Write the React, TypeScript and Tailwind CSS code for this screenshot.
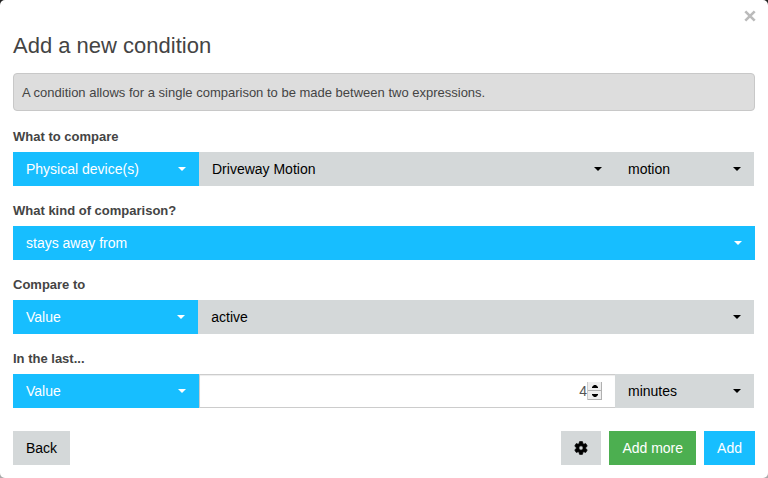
import React, { useId, useState } from "react";

type Tone = "blue" | "gray";

const tones: Record<Tone, string> = {
  blue: "bg-[#17beff] text-white",
  gray: "bg-[#d4d8d9] text-black",
};

function Caret() {
  return (
    <svg
      aria-hidden="true"
      viewBox="0 0 8 4"
      className="pointer-events-none absolute top-[15px] right-[13px] h-1 w-2 fill-current"
    >
      <path d="M0 0h8L4 4z" />
    </svg>
  );
}

function Picker({
  id,
  label,
  value,
  options = [],
  tone = "gray",
}: {
  id?: string;
  label?: string;
  value: string;
  options?: string[];
  tone?: Tone;
}) {
  return (
    <div className={`relative min-w-0 ${tones[tone]}`}>
      <select
        id={id}
        aria-label={label}
        defaultValue={value}
        className="block h-[34px] w-full appearance-none bg-transparent pr-8 pl-[13px] text-sm"
      >
        {[value, ...options].map((o) => (
          <option key={o}>{o}</option>
        ))}
      </select>
      <Caret />
    </div>
  );
}

function Field({
  label,
  columns,
  children,
}: {
  label: string;
  columns: string;
  children: (id: string) => React.ReactNode;
}) {
  const id = useId();
  return (
    <div>
      <label htmlFor={id} className="block pb-[5px] text-[13px] leading-5 font-bold">
        {label}
      </label>
      <div className={`grid ${columns}`}>{children(id)}</div>
    </div>
  );
}

function NumberBox() {
  const [n, setN] = useState(4);
  const step =
    "flex h-[9px] w-full items-center justify-center border-r border-b border-[#b0b0b0] bg-[#eeeeee]";
  return (
    <div className="relative min-w-0">
      <input
        type="number"
        aria-label="Duration"
        value={n}
        onChange={(e) => setN(Number(e.target.value))}
        className="block h-[34px] w-full border border-r-0 border-[#cccccc] bg-white pr-7 text-right text-sm text-[#555555] shadow-[inset_0_1px_1px_rgba(0,0,0,0.075)] [appearance:textfield] [&::-webkit-inner-spin-button]:appearance-none"
      />
      <div className="absolute top-2 right-[13px] flex w-[15px] flex-col border-l border-[#cccccc]">
        <button type="button" aria-label="Increase" onClick={() => setN(n + 1)} className={step}>
          <svg viewBox="0 0 6 3" className="h-[3px] w-1.5">
            <path d="M0 3V2L2 0h2l2 2v1z" />
          </svg>
        </button>
        <button type="button" aria-label="Decrease" onClick={() => setN(n - 1)} className={step}>
          <svg viewBox="0 0 6 3" className="h-[3px] w-1.5">
            <path d="M0 0v1l2 2h2l2-2V0z" />
          </svg>
        </button>
      </div>
    </div>
  );
}

function Gear() {
  return (
    <svg aria-hidden="true" viewBox="0 0 24 24" className="h-4 w-4 fill-black stroke-black">
      <path d="M19.14 12.94c.04-.3.06-.61.06-.94 0-.32-.02-.64-.07-.94l2.03-1.58a.49.49 0 0 0 .12-.61l-1.92-3.32a.49.49 0 0 0-.59-.22l-2.39.96c-.5-.38-1.03-.7-1.62-.94l-.36-2.54a.48.48 0 0 0-.48-.41h-3.84a.48.48 0 0 0-.47.41l-.36 2.54c-.59.24-1.13.57-1.62.94l-2.39-.96a.48.48 0 0 0-.59.22L2.74 8.87a.48.48 0 0 0 .12.61l2.03 1.58c-.05.3-.09.63-.09.94s.02.64.07.94l-2.03 1.58a.49.49 0 0 0-.12.61l1.92 3.32c.12.22.37.29.59.22l2.39-.96c.5.38 1.03.7 1.62.94l.36 2.54c.05.24.24.41.48.41h3.84c.24 0 .44-.17.47-.41l.36-2.54c.59-.24 1.13-.56 1.62-.94l2.39.96c.22.08.47 0 .59-.22l1.92-3.32a.48.48 0 0 0-.12-.61l-2.01-1.58zM12 15.2a3.2 3.2 0 1 1 0-6.4 3.2 3.2 0 0 1 0 6.4z" />
    </svg>
  );
}

export default function App() {
  const button = "h-[34px] px-[13px] text-sm";
  const threeColumns = "mr-px grid-cols-[186fr_416fr_139fr]";
  return (
    <div className="min-h-screen bg-linear-to-b from-[#222222] to-[#aaaaaa] font-['Liberation_Sans',Arial,sans-serif] text-[#444444]">
      <form
        role="dialog"
        aria-labelledby="dialog-title"
        onSubmit={(e) => e.preventDefault()}
        className="relative min-h-screen rounded-[5px] bg-white p-[13px] pt-8"
      >
        <button
          type="button"
          aria-label="Close"
          className="absolute top-1 right-3 text-[#bbbbbb]"
        >
          <svg viewBox="0 0 12 24" className="h-6 w-3 fill-none stroke-current stroke-[2.6]">
            <path d="M1.3 7.3l9.4 9.4M10.7 7.3l-9.4 9.4" />
          </svg>
        </button>

        <h1 id="dialog-title" className="text-[22px] leading-7">
          Add a new condition
        </h1>

        <p className="mt-[13px] mb-4 rounded-[4px] border border-[#c8c8c8] bg-[#dddddd] px-2 pt-[9px] pb-[7px] text-[13px] leading-5">
          A condition allows for a single comparison to be made between two expressions.
        </p>

        <div className="flex flex-col gap-[15px]">
          <Field label="What to compare" columns={threeColumns}>
            {(id) => (
              <>
                <Picker id={id} tone="blue" value="Physical device(s)" options={["Value", "Variable"]} />
                <Picker label="Device" value="Driveway Motion" />
                <Picker label="Attribute" value="motion" />
              </>
            )}
          </Field>
          <Field label="What kind of comparison?" columns="grid-cols-1">
            {(id) => <Picker id={id} tone="blue" value="stays away from" />}
          </Field>
          <Field label="Compare to" columns="mr-px grid-cols-[1fr_3fr]">
            {(id) => (
              <>
                <Picker id={id} tone="blue" value="Value" options={["Variable"]} />
                <Picker label="Compared value" value="active" options={["inactive"]} />
              </>
            )}
          </Field>
          <Field label="In the last..." columns={threeColumns}>
            {(id) => (
              <>
                <Picker id={id} tone="blue" value="Value" options={["Variable"]} />
                <NumberBox />
                <Picker label="Unit" value="minutes" options={["seconds", "hours"]} />
              </>
            )}
          </Field>
        </div>

        <div className="mt-[23px] flex items-center gap-2">
          <button type="button" className={`${button} mr-auto bg-[#d4d8d9] text-black`}>
            Back
          </button>
          <button
            type="button"
            aria-label="Settings"
            className="flex h-[34px] w-10 items-center justify-center bg-[#d4d8d9]"
          >
            <Gear />
          </button>
          <button type="button" className={`${button} bg-[#4caf50] text-white`}>
            Add more
          </button>
          <button type="submit" className={`${button} bg-[#17beff] text-white`}>
            Add
          </button>
        </div>
      </form>
    </div>
  );
}
